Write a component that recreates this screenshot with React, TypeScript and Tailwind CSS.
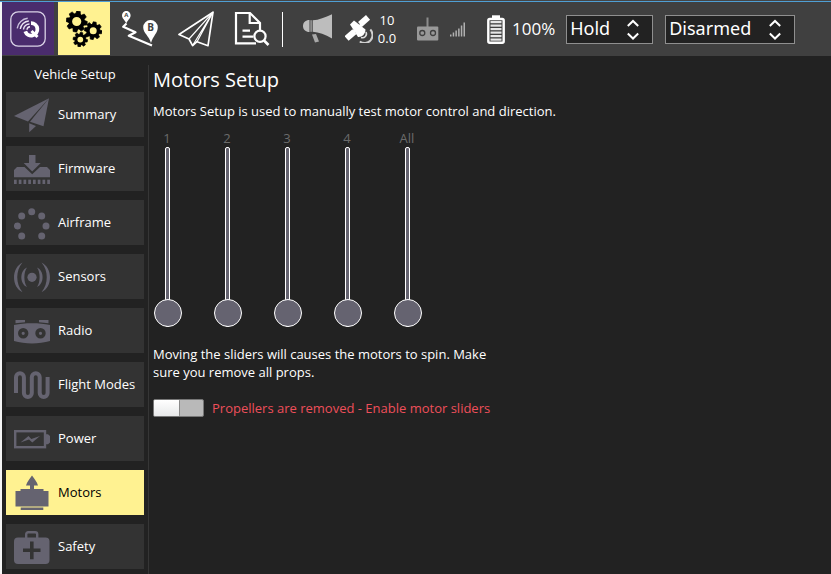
import { useState, type ReactNode } from "react";

const SLATE = "#656370";

function Gear({ x, y, r, hole }: { x: number; y: number; r: number; hole: number }) {
  const body = r * 0.78;
  return (
    <g transform={`translate(${x} ${y})`}>
      {[0, 45, 90, 135, 180, 225, 270, 315].map((a) => (
        <path
          key={a}
          transform={`rotate(${a + 10})`}
          d={`M${-r * 0.24} ${-body + 1} L${-r * 0.17} ${-r} H${r * 0.17} L${r * 0.24} ${-body + 1} Z`}
          fill="#000"
          stroke="#000"
          strokeWidth="0.6"
        />
      ))}
      <circle r={(body + hole) / 2} fill="none" stroke="#000" strokeWidth={body - hole} />
    </g>
  );
}

function LogoIcon() {
  return (
    <svg width="36" height="36" viewBox="0 0 36 36" fill="none" aria-hidden="true">
      <rect x="0.8" y="0.8" width="34.4" height="34.4" rx="7.5" stroke="#d9d2e6" strokeWidth="1.3" />
      <path d="M21 12.200a6.200 6.200 0 1 1 -5.700 8.200" stroke="#fff" strokeWidth="3.800" />
      <path d="M21.500 20L27.500 26" stroke="#fff" strokeWidth="3" />
      <g stroke="#ece7f4" strokeWidth="1.400">
        <path d="M17 18.800a3.200 3.200 0 0 1 3-3" />
        <path d="M13.500 18.500a6 6 0 0 1 6-5.500" />
        <path d="M10.300 18a9 9 0 0 1 8.500-8" />
        <path d="M7.200 17.300a12 12 0 0 1 10.500-10" stroke="#c9bfdb" />
      </g>
    </svg>
  );
}

function GearsIcon() {
  return (
    <svg width="36" height="36" viewBox="0 0 36 36" aria-hidden="true">
      <Gear x={10.7} y={10.5} r={10.5} hole={4.6} />
      <Gear x={27.2} y={19.7} r={8.8} hole={3.5} />
      <Gear x={14.3} y={28.6} r={7.2} hole={2.9} />
    </svg>
  );
}

function PlanIcon() {
  return (
    <svg width="36" height="36" viewBox="0 0 36 36" aria-hidden="true">
      <path d="M4.500 12.500L1.200 15.800L13.500 21.300L6.800 24.800L30 34.600" fill="none" stroke="#fff" strokeWidth="2.200" strokeLinejoin="round" />
      <path d="M4.300 12.500C3 9 0 7.500 0 4.200a4.300 4.300 0 0 1 8.600 0C8.600 7.500 5.600 9 4.300 12.500Z" fill="#fff" />
      <path d="M29 32C27 25 21.200 22 21.200 16.300a7.300 7.300 0 0 1 14.600 0C35.800 22 31 25 29 32Z" fill="#fff" />
      <text x="4.300" y="6.200" textAnchor="middle" fontSize="6" fontWeight="700" fontFamily="Open Sans, sans-serif" fill="#404040">A</text>
      <text x="28.500" y="20" textAnchor="middle" fontSize="10" fontWeight="700" fontFamily="Open Sans, sans-serif" fill="#404040">B</text>
    </svg>
  );
}

function FlyIcon() {
  return (
    <svg width="36" height="36" viewBox="0 0 36 36" fill="none" stroke="#fff" strokeLinejoin="round" aria-hidden="true">
      <path d="M35 1.200L1 23.500L11 28L14.600 34.700L19 30.700L30 34.700Z" strokeWidth="1.700" />
      <path d="M35 1.200L11 28M35 1.200L14.600 34.500M35 1.200L19 30.700" strokeWidth="1.200" />
    </svg>
  );
}

function AnalyzeIcon() {
  return (
    <svg width="36" height="36" viewBox="0 0 36 36" fill="none" stroke="#fff" strokeWidth="2.200" aria-hidden="true">
      <path d="M26 19V12L16 2H2V32.300H22" />
      <path d="M15.700 2V12H26" />
      <path d="M8.500 19.700H16M8.500 25.700H19.500" />
      <circle cx="26" cy="25.300" r="5.600" />
      <path d="M30 29.500L34.500 34" strokeWidth="2.600" />
    </svg>
  );
}

function MegaphoneIcon() {
  return (
    <svg width="30" height="30" viewBox="0 0 30 30" fill="#bdbdbd" aria-hidden="true">
      <path d="M6.500 6C2.500 6 0 8.500 0 12s2.500 6 6.500 6Z" />
      <path d="M7.200 6.200H9.200V17.800H7.200Z" fill="#8c8c8c" />
      <path d="M9.800 6.300C16 6 22 3.500 29 0.300V24.500C22 20.500 16 18 9.800 17.700Z" />
      <path d="M9 20.500L13 20L16 27.500L12 28.500Z" fill="#a8a8a8" />
    </svg>
  );
}

function SatelliteIcon() {
  return (
    <svg width="28" height="28" viewBox="0 0 28 28" aria-hidden="true">
      <g transform="rotate(-41 13 13)" fill="#fff">
        <rect x="17" y="8.500" width="10.500" height="6.200" />
        <rect x="-2.500" y="10.300" width="10.500" height="6.200" />
        <path d="M7 11.500H18V14.500H7Z" />
      </g>
      <path d="M5 9.500L9 5.500L20.500 14.500A7 7 0 0 1 13 22Z" fill="#fff" />
      <path d="M21 17a4 4 0 0 1-5 5.500" fill="none" stroke="#ddd" strokeWidth="1.600" />
      <path d="M25.300 14.500a8 8 0 0 1-10.500 12" fill="none" stroke="#d0d0d0" strokeWidth="2" />
    </svg>
  );
}

function RcIcon() {
  return (
    <svg width="22" height="24" viewBox="0 0 22 24" aria-hidden="true">
      <path d="M9.500 0.500H11.500V10H9.500Z" fill="#8c8c8c" />
      <rect x="0" y="9.500" width="21.300" height="14" rx="1" fill="#999" />
      <g fill="none" stroke="#404040" strokeWidth="1.300">
        <circle cx="5.300" cy="16" r="2.500" />
        <circle cx="16" cy="16" r="2.500" />
      </g>
    </svg>
  );
}

function SignalIcon() {
  return (
    <svg width="16" height="15" viewBox="0 0 16 15" fill="#b0b0b0" aria-hidden="true">
      {[2, 4, 6, 8, 11, 14].map((h, i) => (
        <rect key={h} x={i * 2.700} y={14.500 - h} width="1.500" height={h} />
      ))}
    </svg>
  );
}

function BatteryIcon() {
  return (
    <svg width="18" height="29" viewBox="0 0 18 29" fill="#fff" aria-hidden="true">
      <path d="M5 0.300H13V4H5Z" />
      <rect x="1.300" y="4" width="15.400" height="23.700" rx="1.500" fill="none" stroke="#fff" strokeWidth="2.400" />
      {[6, 9.5, 13, 16.5, 20, 23.5].map((y) => (
        <rect key={y} x="3.500" y={y} width="11" height="2.200" fill="#e6e6e6" />
      ))}
    </svg>
  );
}

function SidebarIcon({ children }: { children: ReactNode }) {
  return (
    <svg className="shrink-0" width="36" height="36" viewBox="0 0 36 36" fill={SLATE} aria-hidden="true">
      {children}
    </svg>
  );
}

const PAGES: { name: string; icon: ReactNode }[] = [
  {
    name: "Summary",
    icon: (
      <>
        <path d="M0 19L35 1.200L14 24.500Z" />
        <path d="M35 1.200L29.500 29.300L16 24.800Z" />
        <path d="M15.200 26.300L22 29L15.200 35.300Z" />
      </>
    ),
  },
  {
    name: "Firmware",
    icon: (
      <>
        <path d="M15 4H21.500V12H26.700L18.200 20.500L9.700 12H15Z" />
        <path d="M3 16H10.500L18.200 23.300L26 16H33L36 19V26.300H0V19Z" />
        {[0, 1, 2, 3, 4, 5, 6, 7].map((i) => (
          <rect key={i} x={i * 4.750} y="28.700" width="2.700" height="4.300" />
        ))}
      </>
    ),
  },
  {
    name: "Airframe",
    icon: (
      <>
        {[[17.7, 6.7], [7.7, 11], [27.7, 11], [3.4, 21], [32, 21], [7.7, 31], [27.7, 31]].map(([x, y]) => (
          <circle key={`${x}-${y}`} cx={x} cy={y} r="3.500" />
        ))}
      </>
    ),
  },
  {
    name: "Sensors",
    icon: (
      <>
        <circle cx="18" cy="18.300" r="4.600" />
        <path d="M13 8.500C5.500 11.500 5.500 25 13 28C9.500 23.500 9.500 13 13 8.500Z" />
        <path d="M23 8.500C30.500 11.500 30.500 25 23 28C26.500 23.500 26.500 13 23 8.500Z" />
        <path d="M8.500 3.500C-2.800 9 -2.800 28 8.500 33.200C1.500 25 1.500 11.500 8.500 3.500Z" />
        <path d="M27.500 3.500C38.800 9 38.800 28 27.500 33.200C34.500 25 34.500 11.500 27.500 3.500Z" />
      </>
    ),
  },
  {
    name: "Radio",
    icon: (
      <>
        <path d="M1.500 7H11V9.300L1.500 10.300ZM25 7H34.500V10.300L25 9.300Z" />
        <path d="M0 12C11 9.700 25 9.700 36 12V28C25 31.300 11 31.300 0 28Z" />
        <g fill="none" stroke="#333" strokeWidth="3.600">
          <circle cx="9.200" cy="20.300" r="3.400" />
          <circle cx="26.500" cy="20.300" r="3.400" />
        </g>
      </>
    ),
  },
  {
    name: "Flight Modes",
    icon: (
      <path
        d="M2 26V10.200a3.950 3.950 0 0 1 7.900 0V26a3.950 3.950 0 0 0 7.900 0V10.200a3.950 3.950 0 0 1 7.900 0V26a3.950 3.950 0 0 0 7.900 0V10"
        fill="none"
        stroke={SLATE}
        strokeWidth="4"
      />
    ),
  },
  {
    name: "Power",
    icon: (
      <>
        <rect x="1.200" y="10.200" width="29.800" height="16" fill="none" stroke={SLATE} strokeWidth="2.400" />
        <path d="M31.500 13.300H34L36 15V21.500L34 23.300H31.500Z" />
        <path d="M6.500 21.500L14.500 15L17.300 18L26 15L18.300 21.500L15 18.500Z" />
      </>
    ),
  },
  {
    name: "Motors",
    icon: (
      <>
        <path d="M18 0.500C20 3 23 7 24 10.500H20V14H29.500V16H34.500V31.500H1.500V16H6.500V14H16V10.500H12C13 7 16 3 18 0.500Z" />
        <path d="M6.700 32.500H29.300V35H6.700Z" />
      </>
    ),
  },
  {
    name: "Safety",
    icon: (
      <>
        <path d="M12.200 9V5.200a2 2 0 0 1 2-2h7a2 2 0 0 1 2 2V9" fill="none" stroke={SLATE} strokeWidth="2.400" />
        <rect x="0" y="8.500" width="35.500" height="26.500" rx="4" />
        <path d="M16 12.500H19.600V19.500H26.500V23.100H19.600V30.200H16V23.100H9V19.500H16Z" fill="#333" />
      </>
    ),
  },
];

function ToolbarSelect({ label, options, className }: { label: string; options: string[]; className: string }) {
  return (
    <div className={`relative h-[29px] ${className}`}>
      <select
        aria-label={label}
        className="size-full appearance-none border border-[#8f8f8f] bg-[#222] pb-[3px] pl-[3px] font-['Noto_Sans',sans-serif] text-[18px] leading-6 text-white"
      >
        {options.map((o) => (
          <option key={o}>{o}</option>
        ))}
      </select>
      <svg
        className="pointer-events-none absolute top-1 right-3.5"
        width="12"
        height="22"
        viewBox="0 0 12 22"
        fill="none"
        stroke="#fff"
        strokeWidth="2"
        aria-hidden="true"
      >
        <path d="M0.800 7L6 2L11.200 7M0.800 14.500L6 19.500L11.200 14.500" />
      </svg>
    </div>
  );
}

const TOOLS = [
  { name: "Application settings", icon: <LogoIcon />, className: "bg-[#4a2c6d]" },
  { name: "Vehicle setup", icon: <GearsIcon />, className: "bg-[#fff291]" },
  { name: "Plan", icon: <PlanIcon />, className: "" },
  { name: "Fly", icon: <FlyIcon />, className: "" },
  { name: "Analyze", icon: <AnalyzeIcon />, className: "" },
];

function Toolbar() {
  return (
    <header className="flex h-[54px] shrink-0 items-center bg-[#404040]">
      <nav className="flex h-full gap-1">
        {TOOLS.map((t) => (
          <button
            key={t.name}
            type="button"
            aria-label={t.name}
            className={`flex h-[53px] w-[52px] items-center justify-center ${t.className}`}
          >
            {t.icon}
          </button>
        ))}
      </nav>
      <div className="ml-1 h-[35px] w-px bg-white" />
      <div className="ml-5 flex items-center">
        <MegaphoneIcon />
        <div className="ml-3 flex items-center gap-1">
          <SatelliteIcon />
          <div className="w-5 text-center text-[13px] leading-[18px]">
            <div>10</div>
            <div>0.0</div>
          </div>
        </div>
        <div className="ml-5 flex items-center gap-[11px]">
          <RcIcon />
          <SignalIcon />
        </div>
        <div className="ml-[21px] flex items-center gap-[7px]">
          <BatteryIcon />
          <span className="text-[17px] leading-6">100%</span>
        </div>
      </div>
      <ToolbarSelect label="Flight mode" options={["Hold", "Mission", "Return"]} className="ml-[11px] w-[87px]" />
      <ToolbarSelect label="Arming state" options={["Disarmed", "Armed"]} className="ml-3 w-[130px]" />
    </header>
  );
}

function Sidebar({ page, onSelect }: { page: string; onSelect: (name: string) => void }) {
  return (
    <aside className="w-[146px] shrink-0 px-1">
      <h2 className="py-[9px] text-center leading-[18px]">Vehicle Setup</h2>
      <nav className="flex flex-col gap-[9px]">
        {PAGES.map((p) => (
          <button
            key={p.name}
            type="button"
            onClick={() => onSelect(p.name)}
            className={`flex h-[45px] items-center gap-2 pt-px pl-2 text-left whitespace-nowrap ${
              p.name === page ? "bg-[#fff291] text-black" : "bg-[#333] text-white"
            }`}
          >
            <SidebarIcon>{p.icon}</SidebarIcon>
            {p.name}
          </button>
        ))}
      </nav>
    </aside>
  );
}

function MotorSlider({ label, enabled }: { label: string; enabled: boolean }) {
  const id = `motor-${label}`;
  return (
    <div className="flex w-7 flex-col items-center">
      <label htmlFor={id} className={`leading-[18px] ${enabled ? "text-white" : "text-[#6b6b6b]"}`}>
        {label}
      </label>
      <input
        id={id}
        type="range"
        min={0}
        max={100}
        defaultValue={0}
        disabled={!enabled}
        className="h-[180px] w-7 appearance-none bg-transparent [direction:rtl] [writing-mode:vertical-lr] [&::-webkit-slider-runnable-track]:box-border [&::-webkit-slider-runnable-track]:h-full [&::-webkit-slider-runnable-track]:w-[5px] [&::-webkit-slider-runnable-track]:rounded-[2px] [&::-webkit-slider-runnable-track]:border [&::-webkit-slider-runnable-track]:border-white [&::-webkit-slider-runnable-track]:bg-[#656370] [&::-webkit-slider-thumb]:-mb-px [&::-webkit-slider-thumb]:-ml-[12px] [&::-webkit-slider-thumb]:box-border [&::-webkit-slider-thumb]:size-7 [&::-webkit-slider-thumb]:appearance-none [&::-webkit-slider-thumb]:rounded-full [&::-webkit-slider-thumb]:border [&::-webkit-slider-thumb]:border-white [&::-webkit-slider-thumb]:bg-[#656370]"
      />
    </div>
  );
}

function MotorsPage() {
  const [enabled, setEnabled] = useState(false);
  return (
    <main className="min-w-0 flex-1 pt-2.5 pl-1">
      <h1 className="text-[20px] leading-7">Motors Setup</h1>
      <p className="mt-2 leading-[18px]">Motors Setup is used to manually test motor control and direction.</p>
      <div className="mt-[9px] flex gap-8">
        {["1", "2", "3", "4", "All"].map((m) => (
          <MotorSlider key={m} label={m} enabled={enabled} />
        ))}
      </div>
      <p className="mt-[18px] max-w-[350px] leading-[18px]">
        Moving the sliders will causes the motors to spin. Make sure you remove all props.
      </p>
      <div className="mt-[18px] flex items-center gap-2">
        <input
          id="enable-sliders"
          type="checkbox"
          role="switch"
          checked={enabled}
          onChange={(e) => setEnabled(e.target.checked)}
          className="flex h-[18px] w-[51px] appearance-none rounded-[2px] border border-[#777] bg-[#b9b9b9] before:h-full before:w-[26px] before:rounded-[1px] before:border-r before:border-[#888] before:bg-linear-to-b before:from-white before:to-[#e8e9ea] before:content-[''] checked:justify-end"
        />
        <label htmlFor="enable-sliders" className="leading-[18px] text-[#ee4f5a]">
          Propellers are removed - Enable motor sliders
        </label>
      </div>
    </main>
  );
}

export default function App() {
  const [page, setPage] = useState("Motors");
  return (
    <div className="flex min-h-screen flex-col border-t border-[#454545] bg-[#222] font-['Open_Sans',sans-serif] text-[13px] text-white">
      <div className="flex flex-1 flex-col border-t border-[#4f9fd4]">
        <div className="flex flex-1 flex-col border-l-2 border-[#f4f4f4]">
          <Toolbar />
          <div className="flex flex-1">
            <Sidebar page={page} onSelect={setPage} />
            <div className="mt-[9px] w-px bg-[#363636]" />
            <MotorsPage />
          </div>
        </div>
      </div>
    </div>
  );
}
